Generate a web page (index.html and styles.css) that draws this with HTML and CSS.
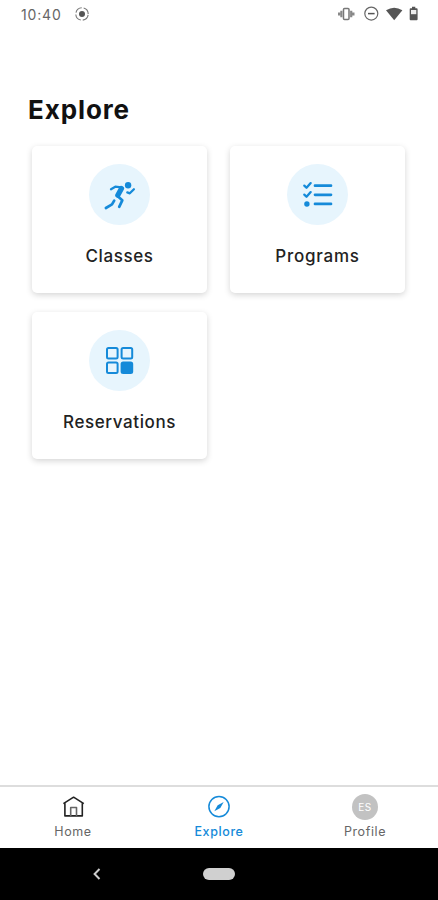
FILE: index.html
```html
<!DOCTYPE html>
<html lang="en">
<head>
<meta charset="utf-8">
<title>Explore</title>
<link rel="stylesheet" href="styles.css">
</head>
<body>
<div class="screen">
  <header class="status">
    <span class="time">10:40</span>
    <svg class="cast" width="14" height="14" viewBox="0 0 14 14"><circle cx="7" cy="7" r="6.2" fill="none" stroke="#777" stroke-width="1.1" stroke-dasharray="7.700 2.040" stroke-dashoffset="-1"/><circle cx="7" cy="7" r="3" fill="#555"/></svg>
    <svg class="system" width="84" height="16" viewBox="0 0 84 16">
      <rect x="5.500" y="2.400" width="5.500" height="11" rx="1" fill="none" stroke="#777" stroke-width="1.500"/>
      <path d="M3.400 4.800v6.400M1.100 6.500v3M13.200 4.800v6.400M15.400 6.500v3" stroke="#888" stroke-width="2.200"/>
      <circle cx="33.300" cy="7.600" r="6.500" fill="none" stroke="#666" stroke-width="1.200"/>
      <path d="M30 7.600h6.600" stroke="#555" stroke-width="1.500"/>
      <path d="M48 4.300Q56.200-1 64.400 4.300L56.200 14.300z" fill="#555"/>
      <path d="M74 .8h3.300v1.500h1.400q.9 0 .9.900v10.100q0 .9-.9.900h-6.100q-.9 0-.9-.9V3.200q0-.9.900-.9H74z" fill="#555"/>
      <path d="M73 4h5.300v4.200H73z" fill="#eee"/>
    </svg>
  </header>

  <main class="content">
    <h1>Explore</h1>
    <div class="grid">
      <section class="card">
        <svg class="icon" viewBox="0 0 61 61">
          <circle cx="30.500" cy="30.500" r="30.500" fill="#e7f5fd"/>
          <g fill="none" stroke="#158ad9" stroke-linecap="round" stroke-linejoin="round">
            <path d="M22 25.200l4.300-2.500 6 .6" stroke-width="2.300"/>
            <path d="M32.500 24.500l-3.700 6.800" stroke-width="5.200"/>
            <path d="M38.300 28.400l2.500.900 4.100-4.100" stroke-width="2.300"/>
            <path d="M28.700 32.300l4.600 4-3.100 6.500" stroke-width="2.700"/>
            <path d="M25.200 36.600l-2.200 3.800-6.100 3.600" stroke-width="2.700"/>
          </g>
          <circle cx="39.100" cy="21.200" r="3.200" fill="#158ad9"/>
        </svg>
        <span class="label">Classes</span>
      </section>
      <section class="card">
        <svg class="icon" viewBox="0 0 61 61">
          <circle cx="30.500" cy="30.500" r="30.500" fill="#e7f5fd"/>
          <g fill="none" stroke="#158ad9" stroke-width="2.300" stroke-linecap="round" stroke-linejoin="round">
            <path d="M17.300 21.600l2.200 2.200 4.200-4.700M17.300 30.600l2.200 2.200 4.200-4.700"/>
            <path d="M28 21.700h16M28 30.800h16M28 39.900h16" stroke-width="2.700"/>
          </g>
          <circle cx="19.900" cy="40" r="2.700" fill="#158ad9"/>
        </svg>
        <span class="label wide">Programs</span>
      </section>
      <section class="card">
        <svg class="icon" viewBox="0 0 61 61">
          <circle cx="30.500" cy="30.500" r="30.500" fill="#e7f5fd"/>
          <g fill="none" stroke="#158ad9" stroke-width="2">
            <rect x="18" y="17.900" width="10.600" height="10.600" rx="1.500"/>
            <rect x="32.600" y="17.900" width="10.600" height="10.600" rx="1.500"/>
            <rect x="18" y="32.500" width="10.600" height="10.600" rx="1.500"/>
            <rect x="32.600" y="32.500" width="10.600" height="10.600" rx="1.500" fill="#158ad9"/>
          </g>
        </svg>
        <span class="label">Reservations</span>
      </section>
    </div>
  </main>

  <nav class="tabs">
    <div class="tab">
      <svg class="tab-icon" viewBox="0 0 26 26" fill="none" stroke="#222" stroke-width="1.600" stroke-linejoin="round"><path d="M4.900 8.600v13.300h17.400V8.600M3.400 9.700L13.600 3.200l10.200 6.500"/><path d="M10.700 21.900v-8.400h5.800v8.400" stroke="#666"/></svg>
      <span>Home</span>
    </div>
    <div class="tab active">
      <svg class="tab-icon" viewBox="0 0 26 26"><circle cx="13" cy="12.600" r="10.100" fill="none" stroke="#158ad9" stroke-width="1.500"/><path d="M17.700 7.900l-3.400 6-6 3.400 3.400-6z" fill="#158ad9"/></svg>
      <span>Explore</span>
    </div>
    <div class="tab">
      <span class="avatar">ES</span>
      <span>Profile</span>
    </div>
  </nav>

  <footer class="system-nav">
    <svg class="back" width="10" height="14" viewBox="0 0 10 14"><path d="M7.500 2L2.600 7l4.900 5" fill="none" stroke="#ccc" stroke-width="2"/></svg>
    <span class="pill"></span>
  </footer>
</div>
</body>
</html>
```

FILE: styles.css
```css
* { box-sizing: border-box; }
body {
  margin: 0;
  background: #fff;
  font-family: Inter, "Liberation Sans", sans-serif;
}
.screen {
  display: flex;
  flex-direction: column;
  width: 438px;
  height: 900px;
}
.status {
  display: flex;
  align-items: center;
  height: 28px;
  padding: 0 16px 0 21px;
}
.time {
  width: 54px;
  font-size: 14px;
  letter-spacing: .85px;
  color: #666;
}
.system { margin-left: auto; }
.content { flex: 1; padding: 66px 32px 0; }
h1 {
  margin: 0 0 21px -4px;
  font-size: 26px;
  line-height: 31px;
  font-weight: 650;
  letter-spacing: .9px;
  color: #111;
}
.grid {
  display: grid;
  grid-template-columns: 175px 175px;
  gap: 19px 23px;
}
.card {
  display: flex;
  flex-direction: column;
  align-items: center;
  height: 147px;
  padding-top: 18px;
  border-radius: 5px;
  background: #fff;
  box-shadow: 0 2px 6px rgba(0, 0, 0, .17);
}
.icon { width: 61px; height: 61px; }
.label {
  margin-top: 19px;
  font-size: 17px;
  line-height: 24px;
  font-weight: 500;
  letter-spacing: .6px;
  color: #222;
}
.wide { letter-spacing: .75px; }
.tabs {
  display: grid;
  grid-template-columns: repeat(3, 1fr);
  height: 63px;
  border-top: 2px solid #ddd;
}
.tab {
  display: flex;
  flex-direction: column;
  align-items: center;
  padding-top: 7px;
  font-size: 12.5px;
  line-height: 16px;
  letter-spacing: .6px;
  color: #666;
}
.active { color: #158ad9; font-weight: 500; }
.tab-icon, .avatar { width: 26px; height: 26px; margin-bottom: 4px; }
.avatar {
  border-radius: 50%;
  background: #c2c2c2;
  color: #fff;
  font-size: 10px;
  line-height: 26px;
  text-align: center;
}
.system-nav {
  display: grid;
  grid-template-columns: 102px 1fr 102px;
  align-items: center;
  height: 52px;
  background: #000;
}
.back { justify-self: end; }
.pill {
  justify-self: center;
  width: 32px;
  height: 12px;
  border-radius: 6px;
  background: #d0d0d0;
}
```
